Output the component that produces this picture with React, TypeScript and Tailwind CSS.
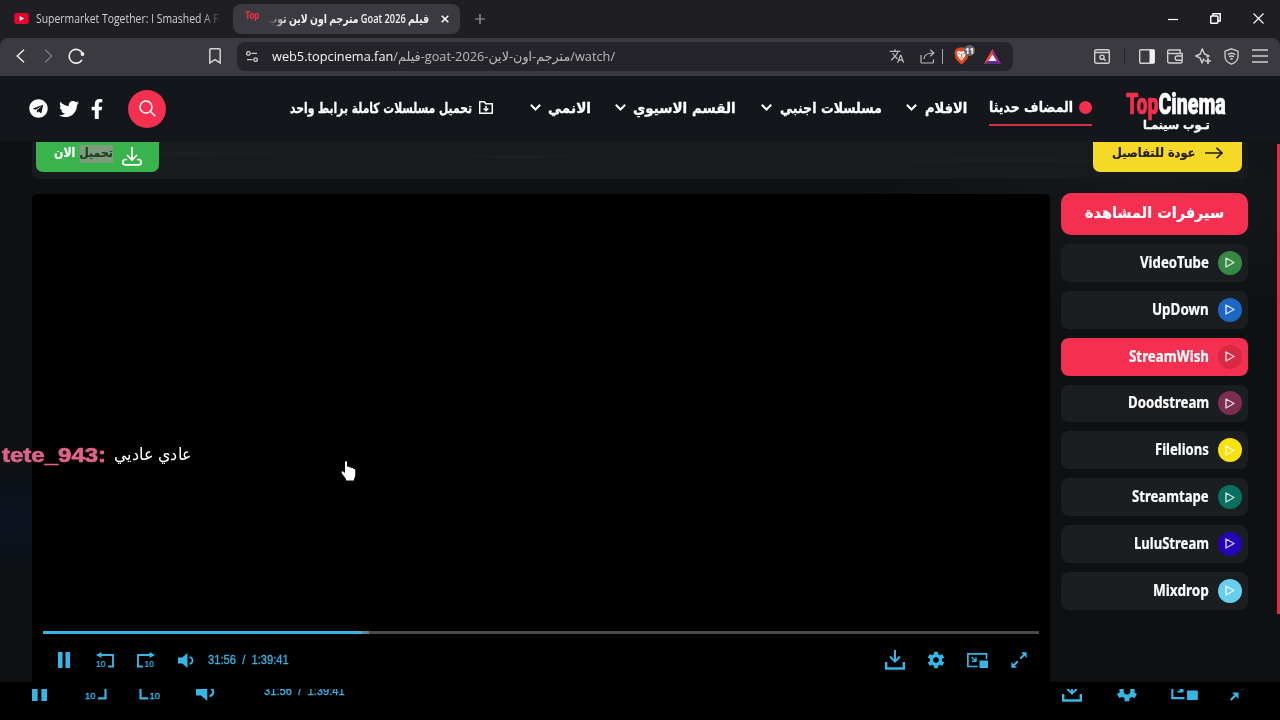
import { ReactNode, useLayoutEffect, useRef, useState } from "react";
import { FaFacebookF, FaTwitter, FaTelegram } from "react-icons/fa";
import { MdTranslate } from "react-icons/md";

type FitProps = {
  className: string;
  children: ReactNode;
  rtl?: boolean;
};

// Squeezes or stretches one line of text to the width of its box
function Fit({ className, children, rtl = false }: FitProps) {
  const outer = useRef<HTMLSpanElement>(null);
  const inner = useRef<HTMLSpanElement>(null);
  const [scale, setScale] = useState(1);

  useLayoutEffect(() => {
    if (!outer.current || !inner.current) return;
    setScale(outer.current.clientWidth / inner.current.offsetWidth);
  }, []);

  return (
    <span
      ref={outer}
      dir="ltr"
      className={`block shrink-0 whitespace-nowrap ${className}`}
    >
      <span
        ref={inner}
        dir={rtl ? "rtl" : "ltr"}
        className="inline-block origin-left"
        style={{ transform: `scaleX(${scale})` }}
      >
        {children}
      </span>
    </span>
  );
}

function TabBar() {
  return (
    <div className="flex h-[38px] items-center bg-[#1f1e23] pb-px text-[12px] font-medium leading-[16px] text-[#d0d0d3]">
      <svg viewBox="0 0 16 12" className="ml-[14px] h-[11px] w-[15px] shrink-0">
        <rect width="16" height="12" rx="3" fill="#e8002f" />
        <path d="M6 3.2 11 6 6 8.8Z" fill="#fff" />
      </svg>
      <div className="ml-[7px] w-[183px] shrink-0 overflow-hidden [mask-image:linear-gradient(to_right,#000_165px,transparent_186px)]">
        <Fit className="w-[183px]">Supermarket Together: I Smashed A F</Fit>
      </div>
      <div className="ml-[14px] flex h-[30px] w-[227px] shrink-0 items-center rounded-[8px] bg-[#3b3a40] text-[#f2f2f4]">
        <Fit className="mb-[5px] ml-[12px] w-[14px] font-['Roboto'] text-[11px] font-black leading-[12px] text-[#e33045]">
          Top
        </Fit>
        <div className="ml-[9px] w-[161px] shrink-0 overflow-hidden [mask-image:linear-gradient(to_left,#000_142px,transparent_161px)]">
          <Fit rtl className="w-[161px] font-semibold">
            فيلم Goat 2026 مترجم اون لاين توب
          </Fit>
        </div>
        <svg viewBox="0 0 8 8" className="ml-[12px] size-[8px]" stroke="#fff" strokeWidth="1.5">
          <path d="M.7.7l6.600 6.600M7.300.7.7 7.300" />
        </svg>
      </div>
      <svg viewBox="0 0 10 10" className="ml-[15px] size-[10px]" stroke="#a2a2a6" strokeWidth="1.2">
        <path d="M5 0v10M0 5h10" />
      </svg>
      <div className="ml-auto mr-[16px] flex items-center gap-[32px]">
        <svg viewBox="0 0 10 10" className="size-[10px]" stroke="#fff" strokeWidth="1.2">
          <path d="M0 5.500h10" />
        </svg>
        <svg viewBox="0 0 11 11" className="size-[11px]" fill="none" stroke="#fff" strokeWidth="1.500">
          <rect x=".7" y="3" width="7.200" height="7.200" rx="1" />
          <path d="M3 3V.8h7.200V8H8" />
        </svg>
        <svg viewBox="0 0 11 11" className="size-[11px]" stroke="#fff" strokeWidth="1.1">
          <path d="M.5.5l10 10M10.500.5l-10 10" />
        </svg>
      </div>
    </div>
  );
}

function Toolbar() {
  return (
    <div className="bg-[#1f1e23]">
      <div className="flex h-[38px] items-center rounded-t-[8px] bg-[#3b3a40] pb-[2px]">
        <svg viewBox="0 0 9 14" className="ml-[16px] h-[14px] w-[9px]" fill="none" stroke="#efeff1" strokeWidth="1.5">
          <path d="M8 .7 1.300 7 8 13.300" />
        </svg>
        <svg viewBox="0 0 9 14" className="ml-[19px] h-[14px] w-[9px]" fill="none" stroke="#77777c" strokeWidth="1.5">
          <path d="M1 .7 7.700 7 1 13.300" />
        </svg>
        <svg viewBox="0 0 17 16" className="ml-[15px] h-[16px] w-[17px]" fill="none" stroke="#efeff1" strokeWidth="1.600">
          <path d="M14.600 6A6.900 6.900 0 1 0 14 11.800" />
          <circle cx="14.500" cy="6" r="1.900" fill="#efeff1" stroke="none" />
        </svg>
        <svg viewBox="0 0 12 16" className="ml-[124px] h-[16px] w-[12px]" fill="none" stroke="#d3d3d6" strokeWidth="1.5">
          <path d="M1.800.8h8.400a1 1 0 0 1 1 1V15L6 11.600.8 15V1.800a1 1 0 0 1 1-1Z" />
        </svg>
        <div className="ml-[16px] flex h-[29px] w-[776px] items-center rounded-[8px] bg-[#25242a]">
          <svg viewBox="0 0 12 11" className="ml-[9px] h-[11px] w-[12px]" fill="none" stroke="#c9c9cc" strokeWidth="1.3">
            <circle cx="2.400" cy="2.400" r="1.800" />
            <circle cx="9.600" cy="8.600" r="1.800" />
            <path d="M5.500 2.400H11M1 8.600h5.500" />
          </svg>
          <Fit className="ml-[14px] w-[343px] text-[13.5px] font-medium leading-[20px] text-[#b9b9bd]">
            <span className="text-[#f4f4f5]">web5.topcinema.fan</span>
            /فيلم-goat-2026-مترجم-اون-لاين/watch/
          </Fit>
          <MdTranslate className="ml-[274px] size-[16px] text-[#b9b9bd]" />
          <svg viewBox="0 0 15 15" className="ml-[15px] size-[15px]" fill="none" stroke="#b9b9bd" strokeWidth="1.2">
            <path d="M1 6v7a1 1 0 0 0 1 1h10.500a1 1 0 0 0 1-1v-2.500M4 10c.2-4 3-6 9-6M10.300.8 13.800 4l-3.500 3.200" />
          </svg>
          <div className="ml-[7px] h-[15px] w-px bg-[#a5a5aa]" />
          <div className="relative ml-[11px] h-[18px] w-[21px] shrink-0">
            <svg viewBox="0 0 15 18" className="h-[18px] w-[15px]">
              <path d="m4 1.500 1.500-1h4l1.500 1h1.500L14.500 5l-1 6.500L10 15.500l-2.500 2-2.500-2L1.500 11.500.5 5l2-3.500Z" fill="#e5491f" />
              <path d="m3 5 2-1 2.500.8L10 4l2 1-.5 3-1.500 3-2.500 2.500L5 11 3.500 8Z" fill="#fff" />
              <path d="m4.500 6.500 2 .6M10.500 6.500l-2 .6M7.500 7v3M6 10.500l1.500 1 1.500-1" stroke="#ee4b22" strokeWidth=".9" fill="none" />
            </svg>
            <span className="absolute -top-[2px] right-0 size-[11px] rounded-full bg-[#66656b] text-center text-[8px] font-bold leading-[11px] text-white">
              11
            </span>
          </div>
          <svg viewBox="0 0 17 15" className="ml-[9px] h-[15px] w-[17px]">
            <path d="M8.500 0 17 15H0Z" fill="#a12a8a" />
            <path d="M8.500 0 0 15 8.500 10Z" fill="#f04a30" />
            <path d="M0 15h17L8.500 10Z" fill="#5b2d91" />
            <path d="M8.500 5.500 12.500 12h-8Z" fill="#fff" />
          </svg>
        </div>
        <div className="ml-auto mr-[12px] flex items-center text-[#cfcfd2]">
          <svg viewBox="0 0 16 15" className="h-[15px] w-[16px]" fill="none" stroke="currentColor" strokeWidth="1.400">
            <rect x=".7" y=".7" width="14.600" height="13.600" rx="1.500" />
            <path d="M1 3.500h14M9.700 9.700l2 2" />
            <circle cx="8" cy="8.200" r="2.100" />
          </svg>
          <div className="ml-[14px] h-[16px] w-px bg-[#26252a]" />
          <svg viewBox="0 0 16 15" className="ml-[14px] h-[15px] w-[16px]" fill="none" stroke="currentColor" strokeWidth="1.400">
            <rect x=".7" y=".7" width="14.600" height="13.600" rx="1.200" />
            <path d="M10.500 1h5v13h-5Z" fill="#f0f0f2" stroke="none" />
          </svg>
          <svg viewBox="0 0 16 15" className="ml-[12px] h-[15px] w-[16px]" fill="none" stroke="currentColor" strokeWidth="1.400">
            <path d="M.7 2.500v10a1.500 1.500 0 0 0 1.500 1.500h11.500a1.500 1.500 0 0 0 1.500-1.500V4.500H2.200A1.500 1.500 0 0 1 2.200 1h11v3.500M15.300 7h-5a2 2 0 0 0 0 4.300h5" />
          </svg>
          <svg viewBox="0 0 16 16" className="ml-[12px] size-[16px]" fill="none" stroke="currentColor" strokeWidth="1.400" strokeLinejoin="round">
            <path d="M9.500 12.500 8.600 11 7 15 5.300 10.200.8 8l4.500-2L7.300.8l2 5L14 8l-2.500 1.200" />
            <path d="M13 10v6M10 13h6" strokeWidth="1.700" />
          </svg>
          <svg viewBox="0 0 15 17" className="ml-[13px] h-[17px] w-[15px]" fill="none" stroke="currentColor" strokeWidth="1.300">
            <path d="m7.500.8 6.500 2.400v5c0 4-2.800 6.500-6.500 8-3.700-1.500-6.500-4-6.500-8v-5Z" />
            <path d="M3.700 6.500q3.800-2.700 7.600 0M5 8.700q2.500-1.600 5 0M6.300 10.700h2.400" strokeWidth="1.500" />
          </svg>
          <svg viewBox="0 0 16 14" className="ml-[13px] h-[14px] w-[16px]" stroke="currentColor" strokeWidth="1.700">
            <path d="M0 1h16M0 7h16M0 13h16" />
          </svg>
        </div>
      </div>
    </div>
  );
}

function Chevron({ className }: { className: string }) {
  return (
    <svg viewBox="0 0 11 7" className={`h-[7px] w-[11px] shrink-0 ${className}`} fill="none" stroke="#fff" strokeWidth="2">
      <path d="m.8.8 4.700 4.700L10.200.8" />
    </svg>
  );
}

function SiteHeader() {
  return (
    <header className="flex h-[66px] bg-[#13171b] font-['DejaVu_Sans'] text-[14px] font-bold leading-[20px] text-white">
      <div className="ml-[29px] flex h-[65px] items-center">
        <FaTelegram className="size-[19px]" />
        <FaTwitter className="ml-[11px] size-[20px]" />
        <FaFacebookF className="ml-[8px] h-[20px] w-[20px]" />
        <div className="ml-[21px] flex size-[38px] items-center justify-center rounded-full bg-[#f52f4f]">
          <svg viewBox="0 0 17 17" className="size-[17px]" fill="none" stroke="#fff" strokeWidth="1.500">
            <circle cx="7" cy="7" r="6" />
            <path d="m11.300 11.300 5 5" />
          </svg>
        </div>
      </div>
      <nav className="ml-[124px] flex h-[63px] items-center [-webkit-text-stroke:0.3px_#fff]">
        <Fit rtl className="w-[182px]">تحميل مسلسلات كاملة برابط واحد</Fit>
        <svg viewBox="0 0 14 13" className="ml-[7px] h-[13px] w-[14px]" fill="none" stroke="#fff" strokeWidth="1.500">
          <path d="M.7 12.300V.7h4.500l1.500 2h6.600v9.600ZM7 4.800v5M4.700 7.500 7 9.800l2.300-2.300" />
        </svg>
        <Chevron className="ml-[37px]" />
        <Fit rtl className="ml-[7px] w-[43px]">الانمي</Fit>
        <Chevron className="ml-[24px]" />
        <Fit rtl className="ml-[7px] w-[103px]">القسم الاسيوي</Fit>
        <Chevron className="ml-[25px]" />
        <Fit rtl className="ml-[8px] w-[102px]">مسلسلات اجنبي</Fit>
        <Chevron className="ml-[24px]" />
        <Fit rtl className="ml-[8px] w-[42px]">الافلام</Fit>
      </nav>
      <div className="ml-[22px] mt-[12px] flex h-[38px] w-[103px] items-center border-b-2 border-[#d62c48] [-webkit-text-stroke:0.3px_#fff]">
        <Fit rtl className="mt-[2px] w-[84px]">المضاف حديثا</Fit>
        <span className="ml-[6px] mt-[2px] size-[13px] rounded-full bg-[#f52f4f]" />
      </div>
      <div className="ml-[34px] flex flex-col items-center pt-[14px]">
        <Fit className="w-[100px] font-['Roboto'] text-[30px] font-black leading-[28px] [-webkit-text-stroke:0.7px]">
          <span className="text-[#f52f4f]">Top</span>Cinema
        </Fit>
        <Fit rtl className="w-[67px] text-[11.5px] leading-[14px] [-webkit-text-stroke:0.4px_#fff]">تـوب سينمـا</Fit>
      </div>
    </header>
  );
}

const servers = [
  { name: "VideoTube", width: "w-[69px]", color: "bg-[#368a45]" },
  { name: "UpDown", width: "w-[57px]", color: "bg-[#1c67c4]" },
  { name: "StreamWish", width: "w-[80px]", color: "bg-[#d92945]", active: true },
  { name: "Doodstream", width: "w-[81px]", color: "bg-[#7c2e50]" },
  { name: "Filelions", width: "w-[54px]", color: "bg-[#f7e20b]" },
  { name: "Streamtape", width: "w-[77px]", color: "bg-[#08705f]" },
  { name: "LuluStream", width: "w-[75px]", color: "bg-[#2404b4]" },
  { name: "Mixdrop", width: "w-[56px]", color: "bg-[#67cfec]" },
];

function ServerList() {
  return (
    <aside className="ml-[11px] flex w-[187px] flex-col gap-[9px] font-['Noto_Sans'] text-[15.5px] font-bold leading-[20px] text-white">
      <div className="-mt-[1px] flex h-[42px] items-center justify-center rounded-[10px] bg-[#f52f4f]">
        <Fit rtl className="mb-[2px] w-[139px] font-['DejaVu_Sans'] [-webkit-text-stroke:0.2px_#fff]">سيرفرات المشاهدة</Fit>
      </div>
      {servers.map((server) => (
        <div
          key={server.name}
          className={`flex h-[37.850px] shrink-0 items-center justify-end rounded-[8px] pr-[6px] ${
            server.active ? "bg-[#f52f4f]" : "bg-[#1a1e21]"
          }`}
        >
          <Fit className={`mb-[2px] [-webkit-text-stroke:0.2px_#fff] ${server.width}`}>{server.name}</Fit>
          <span className={`ml-[9px] flex size-[24px] items-center justify-center rounded-full ${server.color}`}>
            <svg viewBox="0 0 10 11" className="h-[11px] w-[10px]" fill="none" stroke="#fff" strokeOpacity=".8" strokeWidth="1.400" strokeLinejoin="round">
              <path d="M1 1v9l8-4.500Z" />
            </svg>
          </span>
        </div>
      ))}
    </aside>
  );
}

type IconProps = { className: string };

function PauseIcon({ className }: IconProps) {
  return (
    <svg viewBox="0 0 12 16" preserveAspectRatio="none" className={`shrink-0 ${className}`} fill="#35b6e6">
      <path d="M0 0h4.500v16H0ZM7.500 0H12v16H7.500Z" />
    </svg>
  );
}

function RewindIcon({ className }: IconProps) {
  return (
    <svg viewBox="0 0 18 16" className={`shrink-0 ${className}`} fill="none" stroke="#35b6e6" strokeWidth="1.900">
      <path d="M3 3h14v11.500h-5" />
      <path d="M5.500 0v6L0 3Z" fill="#35b6e6" stroke="none" />
      <text x="0" y="15" fontSize="8.500" fontFamily="Liberation Sans" fill="#35b6e6" stroke="#35b6e6" strokeWidth=".2">10</text>
    </svg>
  );
}

function ForwardIcon({ className }: IconProps) {
  return (
    <svg viewBox="0 0 18 16" className={`shrink-0 ${className}`} fill="none" stroke="#35b6e6" strokeWidth="1.900">
      <path d="M15 3H1v11.500h5" />
      <path d="M12.500 0v6L18 3Z" fill="#35b6e6" stroke="none" />
      <text x="7.500" y="15" fontSize="8.500" fontFamily="Liberation Sans" fill="#35b6e6" stroke="#35b6e6" strokeWidth=".2">10</text>
    </svg>
  );
}

function VolumeIcon({ className }: IconProps) {
  return (
    <svg viewBox="0 0 16 15" className={`shrink-0 ${className}`} fill="#35b6e6">
      <path d="M0 4.500h4.200L9.500 0v15l-5.300-4.500H0Z" />
      <path d="M11.500 4c4 1 4 6 0 7" fill="none" stroke="#35b6e6" strokeWidth="1.800" />
    </svg>
  );
}

function DownloadIcon({ className }: IconProps) {
  return (
    <svg viewBox="0 0 20 20" className={`shrink-0 ${className}`} fill="none" stroke="#35b6e6" strokeWidth="2">
      <path d="M10 0v11M5 6.500l5 5 5-5" />
      <path d="M1.200 12v6.500h17.600V12" strokeWidth="2.400" />
    </svg>
  );
}

function GearIcon({ className }: IconProps) {
  return (
    <svg viewBox="-10 -10 20 20" className={`shrink-0 ${className}`} fill="none" stroke="#35b6e6">
      <circle r="5" strokeWidth="3.800" />
      <path
        d="M0-5.500v-3.800M0 5.500v3.800M4.800-2.800l3.200-1.900M-4.800 2.800l-3.200 1.900M4.800 2.800 8 4.700M-4.800-2.800-8-4.700"
        strokeWidth="4.400"
      />
    </svg>
  );
}

function PipIcon({ className }: IconProps) {
  return (
    <svg viewBox="0 0 21 15" className={`shrink-0 ${className}`} fill="none" stroke="#35b6e6" strokeWidth="1.700">
      <path d="M10.500 13.500H.9V.9h18.600v5" />
      <path d="m4.500 4 4 3.700M9 4.300v4H5" strokeWidth="1.400" />
      <path d="M12.500 7.500H21V15h-8.500Z" fill="#35b6e6" stroke="none" />
    </svg>
  );
}

function ExpandIcon({ className }: IconProps) {
  return (
    <svg viewBox="0 0 16 16" className={`shrink-0 ${className}`} fill="#35b6e6">
      <path d="M10 .3h5.700V6ZM.3 10v5.700H6Z" />
      <path d="m9.200 6.800 4-4M6.800 9.200l-4 4" stroke="#35b6e6" strokeWidth="2" />
    </svg>
  );
}

function Player() {
  return (
    <div className="flex w-[1018px] shrink-0 flex-col justify-end rounded-t-[5px] bg-black">
      <div className="mx-[11px] h-[3px] bg-[#4b4b4b]">
        <div className="h-full w-[326px] bg-[#63808b]">
          <div className="h-full w-[319px] bg-[#35b6e6]" />
        </div>
      </div>
      <div className="flex h-[48px] items-center pl-[26px] pr-[23px] pt-[4px]">
        <PauseIcon className="h-[16px] w-[12px]" />
        <RewindIcon className="ml-[26px] h-[16px] w-[18px]" />
        <ForwardIcon className="ml-[23px] h-[16px] w-[18px]" />
        <VolumeIcon className="ml-[23px] h-[15px] w-[16px]" />
        <Fit className="ml-[14px] w-[81px] font-['Liberation_Sans'] text-[12px] leading-[16px] text-[#35b6e6] [-webkit-text-stroke:0.3px_#35b6e6]">
          31:56&nbsp; /&nbsp; 1:39:41
        </Fit>
        <DownloadIcon className="ml-auto h-[20px] w-[20px]" />
        <GearIcon className="ml-[22px] size-[18px]" />
        <PipIcon className="ml-[22px] h-[15px] w-[21px]" />
        <ExpandIcon className="ml-[23px] size-[16px]" />
      </div>
    </div>
  );
}

// Only the lower half of this row of controls is visible
function ControlStrip() {
  return (
    <div className="h-[38px] bg-black pt-[7px]">
      <div className="flex h-[14px] items-start overflow-hidden pl-[32px]">
        <PauseIcon className="-mt-[6px] h-[18px] w-[15px]" />
        <svg viewBox="0 0 22 12" className="ml-[38px] h-[12px] w-[22px] shrink-0" fill="none" stroke="#35b6e6" strokeWidth="2.200">
          <path d="M20.500 0v9.300H13" />
          <text x="0" y="10" fontSize="9.500" fontFamily="Liberation Sans" fill="#35b6e6" stroke="#35b6e6" strokeWidth=".3">10</text>
        </svg>
        <svg viewBox="0 0 22 12" className="ml-[32px] h-[12px] w-[22px] shrink-0" fill="none" stroke="#35b6e6" strokeWidth="2.200">
          <path d="M1.500 0v9.300H9" />
          <text x="10.500" y="10" fontSize="9.500" fontFamily="Liberation Sans" fill="#35b6e6" stroke="#35b6e6" strokeWidth=".3">10</text>
        </svg>
        <VolumeIcon className="-mt-[6px] ml-[35px] h-[18px] w-[19px]" />
        <Fit className="-mt-[6px] ml-[49px] w-[81px] font-['Liberation_Sans'] text-[12px] leading-[16px] text-[#35b6e6] [-webkit-text-stroke:0.3px_#35b6e6]">
          31:56&nbsp; /&nbsp; 1:39:41
        </Fit>
        <DownloadIcon className="-mt-[7px] ml-[717px] h-[20px] w-[20px]" />
        <GearIcon className="-mt-[9px] ml-[34px] size-[22px]" />
        <PipIcon className="-mt-[8px] ml-[33px] h-[19px] w-[27px]" />
        <svg viewBox="0 0 14 12" className="ml-[32px] h-[12px] w-[14px] shrink-0" fill="#35b6e6">
          <path d="M2 3.500h6.500V10Z" />
          <path d="m.7 11 5-5" stroke="#35b6e6" strokeWidth="2.200" />
          <path d="M11 0h2.500v1.200Z" opacity=".6" />
        </svg>
      </div>
    </div>
  );
}

function App() {
  return (
    <div className="relative h-[720px] w-[1280px] overflow-hidden bg-black font-['Open_Sans','DejaVu_Sans',sans-serif]">
      <TabBar />
      <Toolbar />
      <SiteHeader />
      <main className="relative h-[540px] bg-[#0d1114] bg-[radial-gradient(ellipse_at_0%_70%,#0c1320_0%,transparent_10%),radial-gradient(ellipse_at_90%_10%,#15191c_0%,transparent_18%)]">
        <div className="mx-[32px] flex h-[37px] items-start justify-between rounded-b-[6px] bg-[#171b1e] bg-[radial-gradient(ellipse_at_13%_30%,#1d2124_0%,transparent_8%),radial-gradient(ellipse_at_40%_40%,#1d2124_0%,transparent_8%),radial-gradient(ellipse_at_80%_50%,#1d2124_0%,transparent_10%)] pl-[4px] pr-[6px] font-['DejaVu_Sans'] text-[12.5px] font-bold leading-[18px]">
          <div className="flex h-[30px] w-[123px] items-center rounded-b-[7px] bg-[#39b34c] pb-[9px] pl-[18px] text-white">
            <Fit rtl className="w-[59px] [-webkit-text-stroke:0.2px]">
              <span className="bg-[#7c9c7d] pb-[3px] text-[#233c27]">تحميل</span> الان
            </Fit>
            <svg viewBox="0 0 20 19" className="ml-[9px] mt-[8px] h-[19px] w-[20px]" fill="none" stroke="#fff" strokeWidth="1.700">
              <path d="M10 0v13M5 8l5 5 5-5" />
              <path d="M5 12.500H3.500a2.600 2.600 0 0 0 0 5.300h13a2.600 2.600 0 0 0 0-5.300H15" />
            </svg>
          </div>
          <div className="flex h-[30px] w-[149px] items-center rounded-b-[7px] bg-[#f5d926] pb-[8px] pl-[19px] text-[#25200c]">
            <Fit rtl className="mb-px w-[83px] [-webkit-text-stroke:0.2px]">عودة للتفاصيل</Fit>
            <svg viewBox="0 0 18 12" className="ml-[10px] h-[12px] w-[18px]" fill="none" stroke="currentColor" strokeWidth="1.700">
              <path d="M0 6h17M11.500.8 17 6l-5.500 5.200" />
            </svg>
          </div>
        </div>
        <div className="mt-[15px] flex h-[488px] pl-[32px]">
          <Player />
          <ServerList />
        </div>
        <div className="absolute right-0 top-[2px] h-[470px] w-[3px] bg-[#e12c49]" />
      </main>
      <ControlStrip />

      <div className="absolute left-[2px] top-[443px] flex items-center leading-[24px]">
        <Fit className="w-[104px] font-['Liberation_Sans'] text-[21px] font-bold text-[#e0648a] [-webkit-text-stroke:0.7px_#e0648a]">
          tete_943:
        </Fit>
        <Fit rtl className="ml-[8px] w-[78px] font-['Liberation_Sans'] text-[17px] text-white">
          عادي عاديي
        </Fit>
      </div>
      <svg viewBox="0 0 15 20" className="absolute left-[341px] top-[461px] h-[20px] w-[15px]" fill="#fff">
        <path d="M4 1.200C4 0 6 0 6 1.200V6c.5-.7 2-.5 2.200.5.7-.6 2-.3 2.200.7.8-.5 2-.1 2.100.9 1-.3 1.800.3 1.800 1.200V14c0 2-1 3-1.300 4v1.500H5V18L1 12.500C-.2 10.500 1.200 9.500 2.500 10.700L4 12Z" />
      </svg>
    </div>
  );
}

export default App;
